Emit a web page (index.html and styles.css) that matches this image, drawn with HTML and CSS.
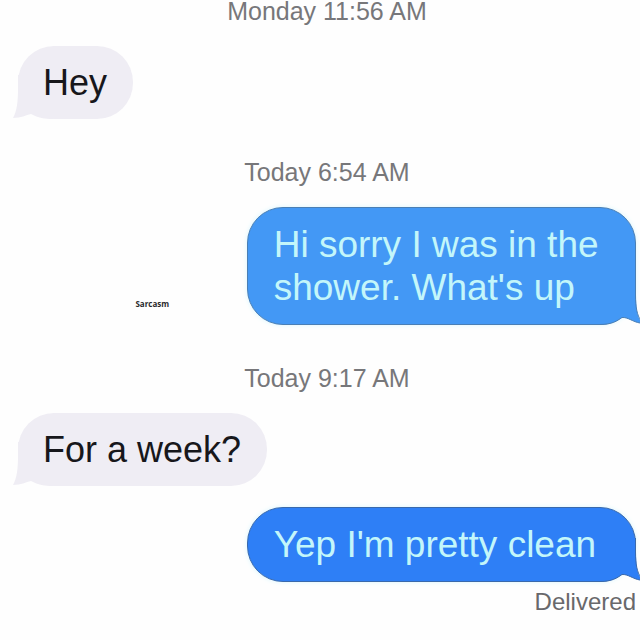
FILE: index.html
```html
<!DOCTYPE html>
<html lang="en">
<head>
<meta charset="utf-8">
<meta name="viewport" content="width=device-width, initial-scale=1">
<title>Messages</title>
<link rel="stylesheet" href="styles.css">
</head>
<body>
<main class="thread">
  <time class="stamp">Monday 11:56 AM</time>
  <div class="row received">
    <p class="bubble">Hey
      <svg class="tail" viewBox="0 0 40 44" aria-hidden="true"><path d="M5 0V14C5 26 4 36 0 43C8 43 13 40 18 39C25 43 32 44 40 44V0Z"/></svg>
    </p>
  </div>
  <time class="stamp later">Today 6:54 AM</time>
  <div class="row sent light">
    <span class="watermark">Sarcasm</span>
    <p class="bubble">Hi sorry I was in the shower. What's up
      <svg class="tail" viewBox="0 0 40 44" aria-hidden="true"><path d="M36 0V14C36 26 37 34 40 39V42C33 41 28 36 22 36.500C17 40 12 43.500 0 43.500V0Z"/><path class="edge" d="M35.500 0V14C35.500 26 37 34 41 40M40 42C33 41 28 36 22 36.500C17 40 12 43.500 0 43.500"/></svg>
    </p>
  </div>
  <time class="stamp later">Today 9:17 AM</time>
  <div class="row received">
    <p class="bubble">For a week?
      <svg class="tail" viewBox="0 0 40 44" aria-hidden="true"><path d="M5 0V14C5 26 4 36 0 43C8 43 13 40 18 39C25 43 32 44 40 44V0Z"/></svg>
    </p>
  </div>
  <div class="row sent deep">
    <p class="bubble">Yep I'm pretty clean
      <svg class="tail" viewBox="0 0 40 44" aria-hidden="true"><path d="M36 0V14C36 26 37 34 40 39V42C33 41 28 36 22 36.500C17 40 12 43.500 0 43.500V0Z"/><path class="edge" d="M35.500 0V14C35.500 26 37 34 41 40M40 42C33 41 28 36 22 36.500C17 40 12 43.500 0 43.500"/></svg>
    </p>
  </div>
  <p class="status">Delivered</p>
</main>
</body>
</html>
```
FILE: styles.css
```css
* {
  box-sizing: border-box;
}

body {
  margin: 0;
  background: #fefefe;
  font-family: "Liberation Sans", Arial, sans-serif;
}

p {
  margin: 0;
}

.thread {
  display: flex;
  flex-direction: column;
  padding: 0 4px 0 18px;
}

.stamp,
.status {
  color: #77777a;
  font-size: 25px;
  line-height: 22px;
}

.stamp {
  margin-bottom: 24px;
  text-align: center;
}

.later {
  margin-top: 42px;
}

.status {
  margin-top: 6px;
  color: #68686b;
  font-size: 24px;
  line-height: 28px;
  text-align: right;
}

.row {
  position: relative;
  display: flex;
}

.bubble {
  position: relative;
  isolation: isolate;
  padding: 15px 26px 15px 25px;
  border-radius: 36px;
  font-size: 36px;
  line-height: 43px;
}

.received .bubble {
  background: #efedf4;
  color: #17171b;
}

.received + .sent {
  margin-top: 21px;
}

.sent {
  justify-content: flex-end;
}

.sent .bubble {
  width: 63%;
  padding: 15px 20px 15px 26px;
  border: 1px solid var(--edge);
  background: var(--fill);
  box-shadow: 0 0 5px #d9f6ff;
  color: #c3f6fa;
  font-size: 37px;
}

.light {
  --fill: #4398f5;
  --edge: #4a7fb5;
}

.deep {
  --fill: #2e7ff6;
  --edge: #3a69ac;
}

.tail {
  position: absolute;
  z-index: -1;
  bottom: 0;
  width: 40px;
  height: 44px;
}

.received .tail {
  left: -5px;
  fill: #efedf4;
}

.sent .tail {
  right: -5px;
  bottom: -1px;
  fill: var(--fill);
}

.sent .edge {
  fill: none;
  stroke: var(--edge);
}

.watermark {
  position: absolute;
  bottom: 16px;
  left: 19%;
  color: #29292b;
  font: bold 8px/10px "Open Sans", sans-serif;
}
```
